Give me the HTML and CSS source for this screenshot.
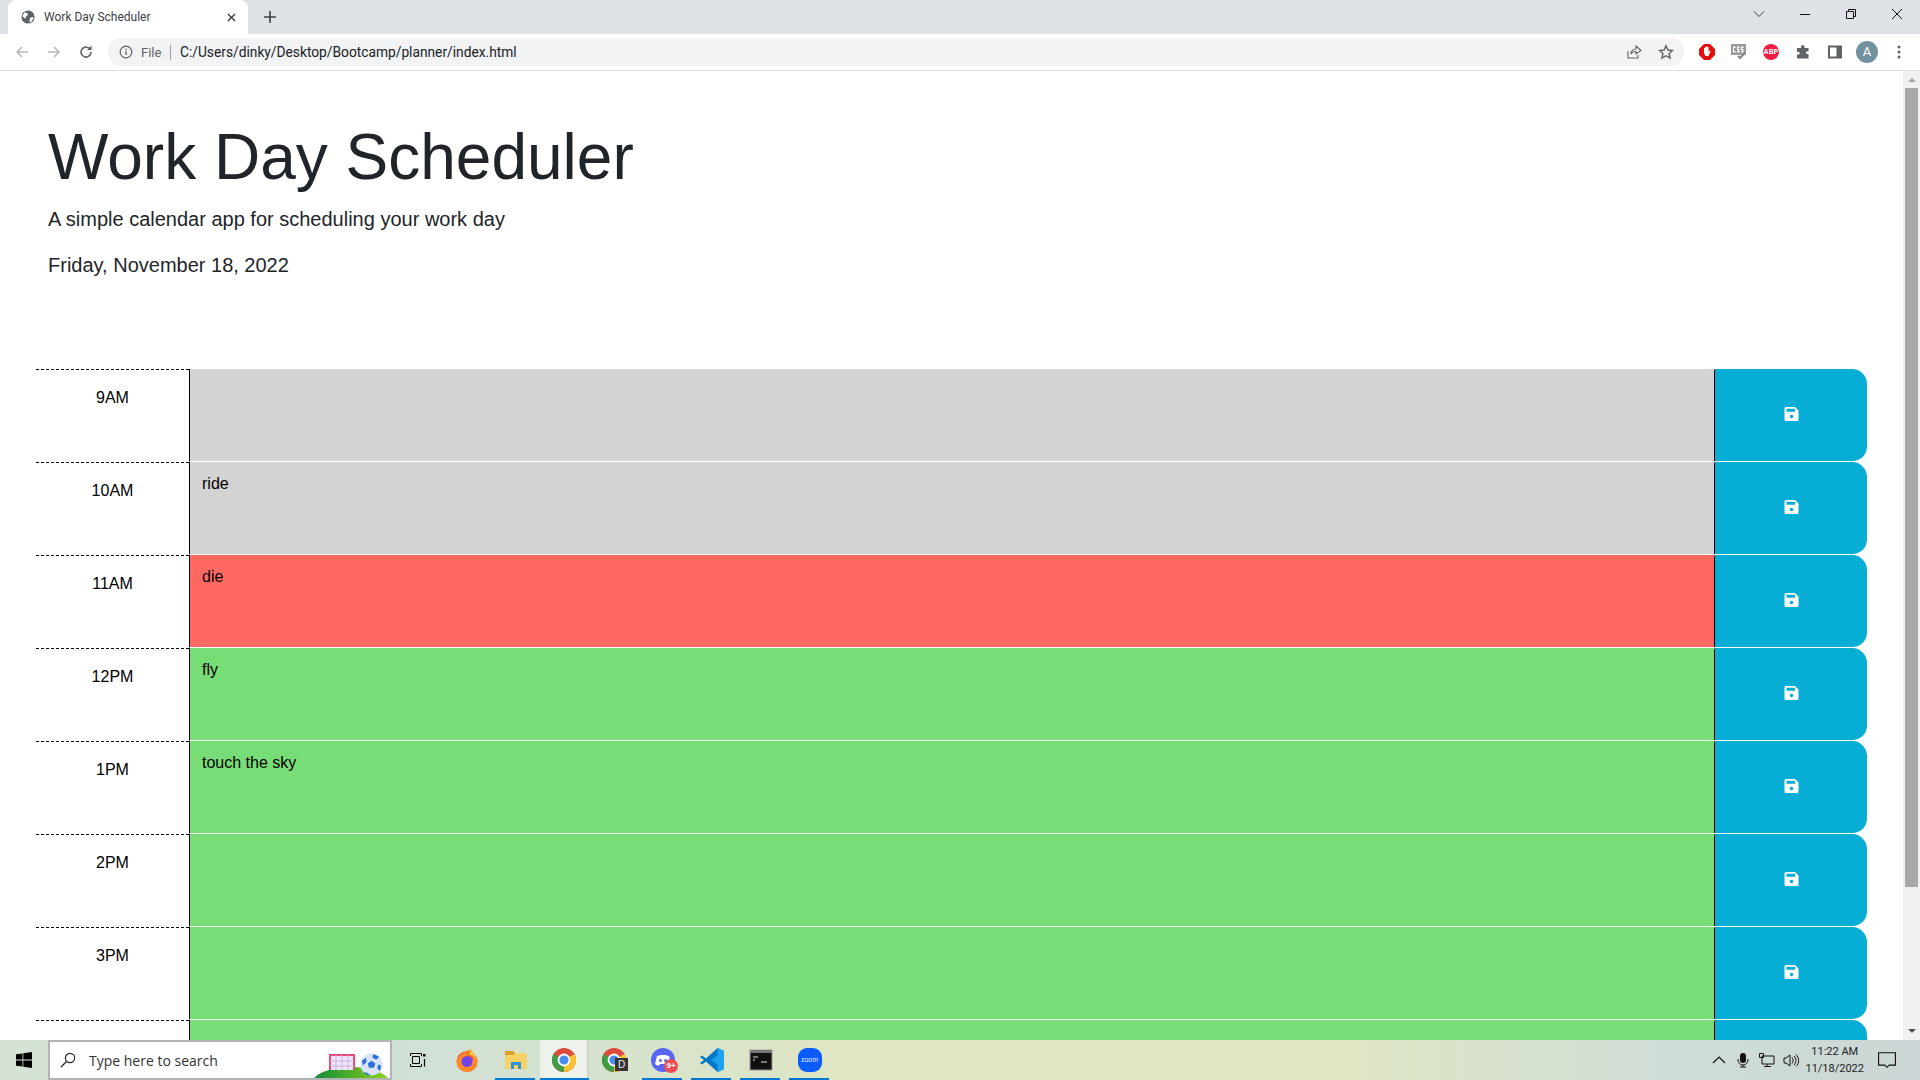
FILE: index.html
```html
<!DOCTYPE html>
<html lang="en">
<head>
    <meta charset="UTF-8">
    <title>Work Day Scheduler</title>
    <link rel="stylesheet" href="styles.css">
</head>
<body>
    <svg class="defs" width="0" height="0">
        <symbol id="floppy" viewBox="0 0 14 14"><path d="M0 1.500A1.500 1.500 0 0 1 1.500 0H10.500L14 3.500v9a1.500 1.500 0 0 1-1.500 1.500h-11A1.500 1.500 0 0 1 0 12.500zM2 1.800v3h8.500v-3zM7 7.700a1.800 1.800 0 1 0 0 3.600 1.800 1.800 0 0 0 0-3.600z" fill="#fff" fill-rule="evenodd"/></symbol>
        <symbol id="chrome" viewBox="0 0 24 24"><circle cx="12" cy="12" r="12" fill="#dd4b3e"/><path d="M12 12L22.400 6A12 12 0 0 1 12 24z" fill="#fbc02d"/><path d="M12 12L12 24A12 12 0 0 1 1.600 6z" fill="#3f9c46"/><circle cx="12" cy="12" r="5.500" fill="#4a8cf0" stroke="#fff" stroke-width="1.800"/></symbol>
    </svg>

    <div class="tabstrip">
        <div class="tab">
            <svg class="favicon" viewBox="0 0 16 16"><circle cx="8" cy="8" r="7.500" fill="#5f6368"/><path d="M4 2.500l3 1 1 2-2 1.500-1 3-3.500-3zM10 9l3-1 1.500 1-2.500 4-2 1.500z" fill="#fff"/></svg>
            <span class="tab-title">Work Day Scheduler</span>
            <svg class="tab-close" viewBox="0 0 10 10"><path d="M1 1l8 8M9 1l-8 8" stroke="#3c4043" stroke-width="1.600"/></svg>
        </div>
        <svg class="new-tab" viewBox="0 0 12 12"><path d="M6 0v12M0 6h12" stroke="#3c4043" stroke-width="1.600"/></svg>
        <div class="window-btns">
            <svg class="win-icon" viewBox="0 0 12 12"><path d="M1 3.500l5 5 5-5" fill="none" stroke="#3c4043"/></svg>
            <svg class="win-icon" viewBox="0 0 12 12"><path d="M1 6.500h10" stroke="#111"/></svg>
            <svg class="win-icon" viewBox="0 0 12 12"><path d="M1.500 3.500h7v7h-7zM3.500 3.500v-2h7v7h-2" fill="none" stroke="#111"/></svg>
            <svg class="win-icon" viewBox="0 0 12 12"><path d="M1 1l10 10M11 1l-10 10" stroke="#111"/></svg>
        </div>
    </div>

    <div class="toolbar">
        <svg class="nav-icon" viewBox="0 0 16 16"><path d="M14 8H3M8 3L3 8l5 5" fill="none" stroke="#b4b7bb" stroke-width="1.500"/></svg>
        <svg class="nav-icon" viewBox="0 0 16 16"><path d="M2 8h11M8 3l5 5-5 5" fill="none" stroke="#b4b7bb" stroke-width="1.500"/></svg>
        <svg class="nav-icon" viewBox="0 0 16 16"><path d="M13 8a5 5 0 1 1-1.500-3.500" fill="none" stroke="#5f6368" stroke-width="1.600"/><path d="M13.500 1.500v4.500H9z" fill="#5f6368"/></svg>
        <div class="omnibox">
            <svg class="info-icon" viewBox="0 0 14 14"><circle cx="7" cy="7" r="5.800" fill="none" stroke="#5f6368" stroke-width="1.200"/><path d="M7 6v4M7 3.700v1.300" stroke="#5f6368" stroke-width="1.300"/></svg>
            <span class="scheme">File</span>
            <span class="url">C:/Users/dinky/Desktop/Bootcamp/planner/index.html</span>
            <svg class="omni-icon" viewBox="0 0 16 16"><path d="M2 7v7h10v-3M5 10c0-3 2-5 5-5V2l5 4.500L10 10V7.500C8 7.500 6 8 5 10z" fill="none" stroke="#5f6368" stroke-width="1.100"/></svg>
            <svg class="omni-icon" viewBox="0 0 16 16"><path d="M8 1.800l1.900 4.200 4.600.5-3.400 3 1 4.500L8 11.700 3.900 14l1-4.500-3.400-3 4.600-.5z" fill="none" stroke="#5f6368" stroke-width="1.400"/></svg>
        </div>
        <div class="extensions">
            <svg class="ext-icon" viewBox="0 0 16 16"><path d="M5 0h6l5 5v6l-5 5H5l-5-5V5z" fill="#e4100c"/><path d="M5 6V4h1v2-3h1.200v3-3.500h1.200V6V3.200h1.200V8l1-1.500 1 .5-2.200 5H6.500L5 9z" fill="#fff"/></svg>
            <svg class="ext-icon" viewBox="0 0 16 16"><rect x="0" y="0" width="15" height="11" fill="#9a9a9a"/><path d="M2 2.500h2.500v1.500H3v3h1.500v1.500H2zM6 2.500h2.500V4H7v1h1.500v3.500H6V7h1.300V6H6zM10 2.500h2.500V4H11v1h1.500v3.500H10V7h1.300V6H10z" fill="#fff"/><path d="M7 12l2 2 5-5" fill="none" stroke="#888" stroke-width="2"/></svg>
            <div class="abp">ABP</div>
            <svg class="ext-icon" viewBox="0 0 16 16"><path d="M6 1.500h3.500v2.500h4v3.500H11v2.500h2.500v4.500H2v-4h2.500V8H2V4h4z" fill="#5f6368"/></svg>
            <svg class="ext-icon" viewBox="0 0 16 16"><path d="M1 1.500h14v13H1z" fill="#5f6368"/><path d="M3 3.500h6.500v9H3z" fill="#fff"/></svg>
            <div class="avatar">A</div>
            <svg class="ext-icon" viewBox="0 0 16 16"><circle cx="8" cy="3" r="1.500" fill="#5f6368"/><circle cx="8" cy="8" r="1.500" fill="#5f6368"/><circle cx="8" cy="13" r="1.500" fill="#5f6368"/></svg>
        </div>
    </div>

    <div class="viewport">
        <div class="page">
            <header class="jumbotron">
                <h1>Work Day Scheduler</h1>
                <p class="lead">A simple calendar app for scheduling your work day</p>
                <p class="lead" id="currentDay">Friday, November 18, 2022</p>
            </header>

            <div class="planner">
                <div class="row">
                    <div class="hour">9AM</div>
                    <div class="description past"></div>
                    <button class="saveBtn"><svg class="save-icon"><use href="#floppy"/></svg></button>
                </div>
                <div class="row">
                    <div class="hour">10AM</div>
                    <div class="description past">ride</div>
                    <button class="saveBtn"><svg class="save-icon"><use href="#floppy"/></svg></button>
                </div>
                <div class="row">
                    <div class="hour">11AM</div>
                    <div class="description present">die</div>
                    <button class="saveBtn"><svg class="save-icon"><use href="#floppy"/></svg></button>
                </div>
                <div class="row">
                    <div class="hour">12PM</div>
                    <div class="description future">fly</div>
                    <button class="saveBtn"><svg class="save-icon"><use href="#floppy"/></svg></button>
                </div>
                <div class="row">
                    <div class="hour">1PM</div>
                    <div class="description future">touch the sky</div>
                    <button class="saveBtn"><svg class="save-icon"><use href="#floppy"/></svg></button>
                </div>
                <div class="row">
                    <div class="hour">2PM</div>
                    <div class="description future"></div>
                    <button class="saveBtn"><svg class="save-icon"><use href="#floppy"/></svg></button>
                </div>
                <div class="row">
                    <div class="hour">3PM</div>
                    <div class="description future"></div>
                    <button class="saveBtn"><svg class="save-icon"><use href="#floppy"/></svg></button>
                </div>
                <div class="row">
                    <div class="hour"></div>
                    <div class="description future"></div>
                    <button class="saveBtn"></button>
                </div>
            </div>
        </div>
        <div class="scrollbar">
            <div class="arrow-up"></div>
            <div class="thumb"></div>
            <div class="arrow-down"></div>
        </div>
    </div>

    <div class="taskbar">
        <svg class="start" viewBox="0 0 16 16"><path d="M0 2.300l6.500-.9v6.200H0zM7.300 1.300L16 0v7.600H7.300zM0 8.400h6.500v6.200L0 13.700zM7.300 8.400H16V16l-8.700-1.200z" fill="#000"/></svg>
        <div class="search">
            <svg class="search-icon" viewBox="0 0 16 16"><circle cx="10" cy="6" r="4.600" fill="none" stroke="#222" stroke-width="1.200"/><path d="M6.500 9.500L1 15" stroke="#222" stroke-width="1.200"/></svg>
            <span class="search-text">Type here to search</span>
            <div class="doodle">
                <div class="hill"></div>
                <svg class="goal" viewBox="0 0 26 18"><path d="M1 17V2h24v15" fill="#f0e6fa" stroke="#e84a7c" stroke-width="2"/><path d="M7 2v15M13 2v15M19 2v15M1 8h24M1 13h24" stroke="#c8b4e4"/></svg>
                <svg class="ball" viewBox="0 0 24 24"><circle cx="12" cy="12" r="11.500" fill="#dbe3f6"/><path d="M12 8l4 3-1.500 4.500h-5L8 11zM2 8l4-3 1 4-4 4zM14 1l6 3-3 3-4-2zM22 13l-1 6-3-3 1-4zM6 20l5 3-4 0-3-3z" fill="#2a6fe0"/></svg>
            </div>
        </div>
        <div class="task-icons">
            <div class="task">
                <svg class="taskview-icon" viewBox="0 0 16 14"><path d="M.5 3V.5h11V3M.5 11v2.500h11V11M2.500 3.500h7v7h-7z" fill="none" stroke="#000"/><path d="M13 1h2.500v2.500H13z" fill="#000"/><path d="M14.500 6v7.500" stroke="#000" stroke-width="1.200"/></svg>
            </div>
            <div class="task">
                <svg class="task-icon" viewBox="0 0 24 24"><circle cx="12" cy="13.500" r="10.500" fill="#ff5b2e"/><path d="M1.500 13.500a10.500 10.500 0 0 0 21 0c0-2-.5-4-1.500-5.500-.5 3-3 5-5 4-1-3-2-5-5-6 3-2 5-4 6-6-2 3-10 2-15.500 13.500z" fill="#ff8a2a"/><circle cx="12" cy="13.500" r="5.500" fill="#7542e5"/><path d="M14 .5c5 3 7.500 8 7 12-1.500-3-4-5.500-7.500-6C15 5 15 3 14 .5z" fill="#ffc43d"/></svg>
            </div>
            <div class="task active-line">
                <svg class="task-icon" viewBox="0 0 24 24"><path d="M1 3h8l2 2h12v16H1z" fill="#f7d266"/><path d="M1 3h8l2 2-1 2H1z" fill="#d9a12c"/><path d="M7 14h10v7h-3v-4h-4v4H7z" fill="#2f8fd8"/></svg>
            </div>
            <div class="task open-app active-line">
                <svg class="task-icon"><use href="#chrome"/></svg>
            </div>
            <div class="task">
                <svg class="task-icon"><use href="#chrome"/></svg>
                <span class="dev-badge">D</span>
            </div>
            <div class="task active-line">
                <svg class="task-icon" viewBox="0 0 24 24"><circle cx="12" cy="12" r="12" fill="#5865f2"/><path d="M6 8c3-1.500 9-1.500 12 0l2 8c-1 1-3 1.500-4 1.500l-1-1.500H9l-1 1.500c-1 0-3-.5-4-1.500z" fill="#fff"/><circle cx="9.500" cy="12.500" r="1.500" fill="#5865f2"/><circle cx="14.500" cy="12.500" r="1.500" fill="#5865f2"/></svg>
                <span class="count-badge">9+</span>
            </div>
            <div class="task active-line">
                <svg class="task-icon" viewBox="0 0 24 24"><path d="M17.500 0L24 3v18l-6.500 3L6 13.500l-4 3L0 15l4-3-4-3 2-1.500 4 3z" fill="#0078c8"/><path d="M17.500 0L24 3v18l-6.500 3V16.500L11 12l6.500-4.500z" fill="#1ea1f1"/></svg>
            </div>
            <div class="task active-line">
                <svg class="task-icon" viewBox="0 0 24 24"><rect x="1" y="2" width="22" height="20" fill="#111" stroke="#999"/><rect x="1" y="2" width="22" height="3" fill="#777"/><path d="M4 9h5M4 12h2M12 14h6" stroke="#ddd"/></svg>
            </div>
            <div class="task active-line">
                <div class="zoom-icon">zoom</div>
            </div>
        </div>
        <div class="tray">
            <svg class="tray-icon" viewBox="0 0 16 16"><path d="M2 11l6-6 6 6" fill="none" stroke="#111" stroke-width="1.200"/></svg>
            <svg class="tray-icon" viewBox="0 0 16 16"><rect x="5" y="1" width="6" height="10" rx="3" fill="#111"/><path d="M3 7v1a5 5 0 0 0 10 0V7M8 13v2M5 15h6" fill="none" stroke="#111"/></svg>
            <svg class="tray-icon" viewBox="0 0 16 16"><path d="M3 4h12v8H3zM8 12v2M5 14.500h7M.5 1.500h4v4h-4z" fill="none" stroke="#111"/></svg>
            <svg class="tray-icon" viewBox="0 0 16 16"><path d="M1 6h2l4-3v11l-4-3H1zM9 5.500c1.500 1.500 1.500 4.500 0 6M11 4c2.500 2.500 2.500 6.500 0 9M13 2.500c3.500 3.500 3.500 9 0 12" fill="none" stroke="#111"/></svg>
            <div class="clock"><span>11:22 AM</span><span>11/18/2022</span></div>
            <svg class="notify" viewBox="0 0 16 16"><path d="M.5 1.500h15v11H10L8 14.500 6 12.500H.5z" fill="none" stroke="#111"/></svg>
        </div>
    </div>
</body>
</html>
```

FILE: styles.css
```css
* {
    box-sizing: border-box;
}
html, body {
    height: 100%;
}
body {
    margin: 0;
    width: 1920px;
    height: 1080px;
    overflow: hidden;
    display: flex;
    flex-direction: column;
    font-family: "Liberation Sans", Arial, sans-serif;
    background-color: #fff;
}
.defs {
    position: absolute;
}

/* browser chrome */
.tabstrip {
    height: 34px;
    flex: none;
    display: flex;
    align-items: flex-end;
    background-color: #dee1e6;
    padding-left: 8px;
}
.tab {
    width: 240px;
    height: 34px;
    display: flex;
    align-items: center;
    padding: 0 12px 0 13px;
    background-color: #fff;
    border-radius: 8px 8px 0 0;
}
.favicon {
    width: 14px;
    height: 14px;
    flex: none;
}
.tab-title {
    margin-left: 9px;
    font: 12px Roboto, sans-serif;
    color: #3c4043;
    flex: 1;
}
.tab-close {
    width: 9px;
    height: 9px;
}
.new-tab {
    width: 12px;
    height: 12px;
    margin: 0 0 11px 16px;
}
.window-btns {
    margin-left: auto;
    display: flex;
    align-self: flex-start;
    margin-top: 8px;
    margin-right: 17px;
    gap: 34px;
}
.win-icon {
    width: 12px;
    height: 12px;
}
.toolbar {
    height: 37px;
    flex: none;
    display: flex;
    align-items: center;
    padding-left: 14px;
    border-bottom: 1px solid #dadce0;
    background-color: #fff;
}
.nav-icon {
    width: 16px;
    height: 16px;
    margin-right: 16px;
}
.omnibox {
    margin-left: -2px;
    width: 1576px;
    height: 28px;
    display: flex;
    align-items: center;
    padding: 0 10px 0 11px;
    background-color: #f1f3f4;
    border-radius: 14px;
}
.info-icon {
    width: 14px;
    height: 14px;
    flex: none;
}
.scheme {
    width: 30px;
    margin-left: 8px;
    border-right: 1px solid #9aa0a6;
    font: 13px Roboto, sans-serif;
    color: #5f6368;
}
.url {
    margin-left: 9px;
    flex: 1;
    font: 13.750px Roboto, sans-serif;
    color: #202124;
}
.omni-icon {
    width: 16px;
    height: 16px;
    margin-left: 16px;
}
.extensions {
    display: flex;
    align-items: center;
    gap: 16px;
    margin-left: 15px;
}
.ext-icon {
    width: 16px;
    height: 16px;
    flex: none;
}
.abp {
    width: 16px;
    height: 16px;
    border-radius: 50%;
    background-color: #ee1d45;
    color: #fff;
    font: bold 7px/16px "Liberation Sans", sans-serif;
    text-align: center;
}
.avatar {
    width: 22px;
    height: 22px;
    margin: 0 -3px;
    border-radius: 50%;
    background-color: #72919f;
    color: #fff;
    font: 13px/22px Roboto, sans-serif;
    text-align: center;
}

/* page */
.viewport {
    flex: 1;
    min-height: 0;
    display: flex;
    overflow: hidden;
}
.page {
    flex: 1;
    min-width: 0;
    padding: 0 36px;
    overflow: hidden;
}
.jumbotron {
    height: 298px;
    padding: 48px 12px 0;
    color: #212529;
}
h1 {
    margin: 0 0 8px;
    font-size: 64px;
    font-weight: 300;
    line-height: 1.2;
}
.lead {
    margin: 0 0 16px;
    font-size: 20px;
    font-weight: 300;
    line-height: 30px;
}
.planner {
    display: flex;
    flex-direction: column;
}
.row {
    height: 93px;
    flex: none;
    display: flex;
}
.hour {
    width: 153px;
    flex: none;
    padding-top: 18px;
    border-top: 1px dashed #000;
    text-align: center;
    font-size: 16px;
    line-height: 19px;
    color: #000;
}
.description {
    flex: 1;
    padding: 12px 12px;
    border-left: 1px solid #000;
    border-bottom: 1px solid #fff;
    font-size: 16px;
    line-height: 20px;
    color: #000;
}
.past {
    background-color: #d3d3d3;
}
.present {
    background-color: #ff6961;
}
.future {
    background-color: #77dd77;
}
.saveBtn {
    width: 153px;
    flex: none;
    display: flex;
    align-items: center;
    justify-content: center;
    padding: 0 0 2px;
    background-color: #06aed5;
    border: none;
    border-left: 1px solid #000;
    border-bottom: 1px solid #fff;
    border-radius: 2px 15px 15px 2px;
}
.save-icon {
    width: 15px;
    height: 14px;
}
.scrollbar {
    width: 17px;
    flex: none;
    display: flex;
    flex-direction: column;
    align-items: center;
    background-color: #f1f1f1;
}
.arrow-up {
    margin: 7px 0 6px;
    border: 4px solid transparent;
    border-top: none;
    border-bottom: 4px solid #a3a3a3;
}
.thumb {
    width: 13px;
    height: 799px;
    background-color: #a8a8a8;
}
.arrow-down {
    margin-top: auto;
    margin-bottom: 7px;
    border: 4px solid transparent;
    border-bottom: none;
    border-top: 4px solid #505050;
}

/* windows taskbar */
.taskbar {
    height: 40px;
    flex: none;
    display: flex;
    align-items: stretch;
    background: linear-gradient(90deg, #d6e3d4 0%, #cfe0d8 20%, #dfe6c2 45%, #dfe6c4 70%, #cfdcd8 88%, #ccd6d6 100%);
}
.start {
    width: 16px;
    height: 16px;
    margin: 12px 16px 0;
    flex: none;
}
.search {
    width: 344px;
    flex: none;
    padding-left: 10px;
    display: flex;
    align-items: center;
    background-color: #fff;
    border: 2px solid #b4b4b4;
    position: relative;
    overflow: hidden;
}
.search-icon {
    width: 16px;
    height: 16px;
}
.search-text {
    margin-left: 13px;
    font: 14px "Open Sans", sans-serif;
    color: #333;
}
.doodle {
    position: absolute;
    left: 263px;
    top: 0;
    width: 76px;
    height: 36px;
}
.hill {
    position: absolute;
    left: 0;
    top: 25px;
    width: 76px;
    height: 30px;
    border-radius: 50%;
    background: linear-gradient(90deg, #108a3a, #8ed41c);
}
.goal {
    position: absolute;
    left: 16px;
    top: 11px;
    width: 26px;
    height: 18px;
}
.ball {
    position: absolute;
    left: 47px;
    top: 11px;
    width: 23px;
    height: 23px;
}
.task-icons {
    display: flex;
    padding-left: 1px;
}
.task {
    width: 49px;
    position: relative;
    display: flex;
    align-items: center;
    justify-content: center;
}
.active-line::after {
    content: "";
    position: absolute;
    left: 4px;
    right: 5px;
    bottom: 0;
    height: 2px;
    background-color: #0078d4;
}
.open-app {
    background-color: #edf2ea;
    border-right: 2px solid #cfd6cc;
}
.open-app::after {
    left: 0;
    right: -2px;
}
.task-icon {
    width: 24px;
    height: 24px;
}
.taskview-icon {
    width: 16px;
    height: 14px;
}
.dev-badge {
    position: absolute;
    left: 26px;
    top: 18px;
    width: 13px;
    height: 13px;
    background-color: #333;
    color: #eee;
    font: 10px/13px "Liberation Sans", sans-serif;
    text-align: center;
}
.count-badge {
    position: absolute;
    left: 26px;
    top: 19px;
    width: 14px;
    height: 14px;
    border-radius: 50%;
    background-color: #ec4c55;
    color: #fff;
    font: bold 8px/14px "Liberation Sans", sans-serif;
    text-align: center;
}
.zoom-icon {
    width: 24px;
    height: 24px;
    border-radius: 9px;
    background-color: #0b5cff;
    color: #e8f0ff;
    font: 7px/24px "Liberation Sans", sans-serif;
    text-align: center;
}
.tray {
    margin-left: auto;
    display: flex;
    align-items: center;
    padding-right: 24px;
}
.tray-icon {
    width: 16px;
    height: 16px;
    margin-right: 8px;
}
.clock {
    display: flex;
    flex-direction: column;
    align-items: center;
    margin: 0 14px 0 -2px;
    font: 11px/17px Roboto, sans-serif;
    color: #222;
}
.notify {
    width: 18px;
    height: 18px;
}
```
